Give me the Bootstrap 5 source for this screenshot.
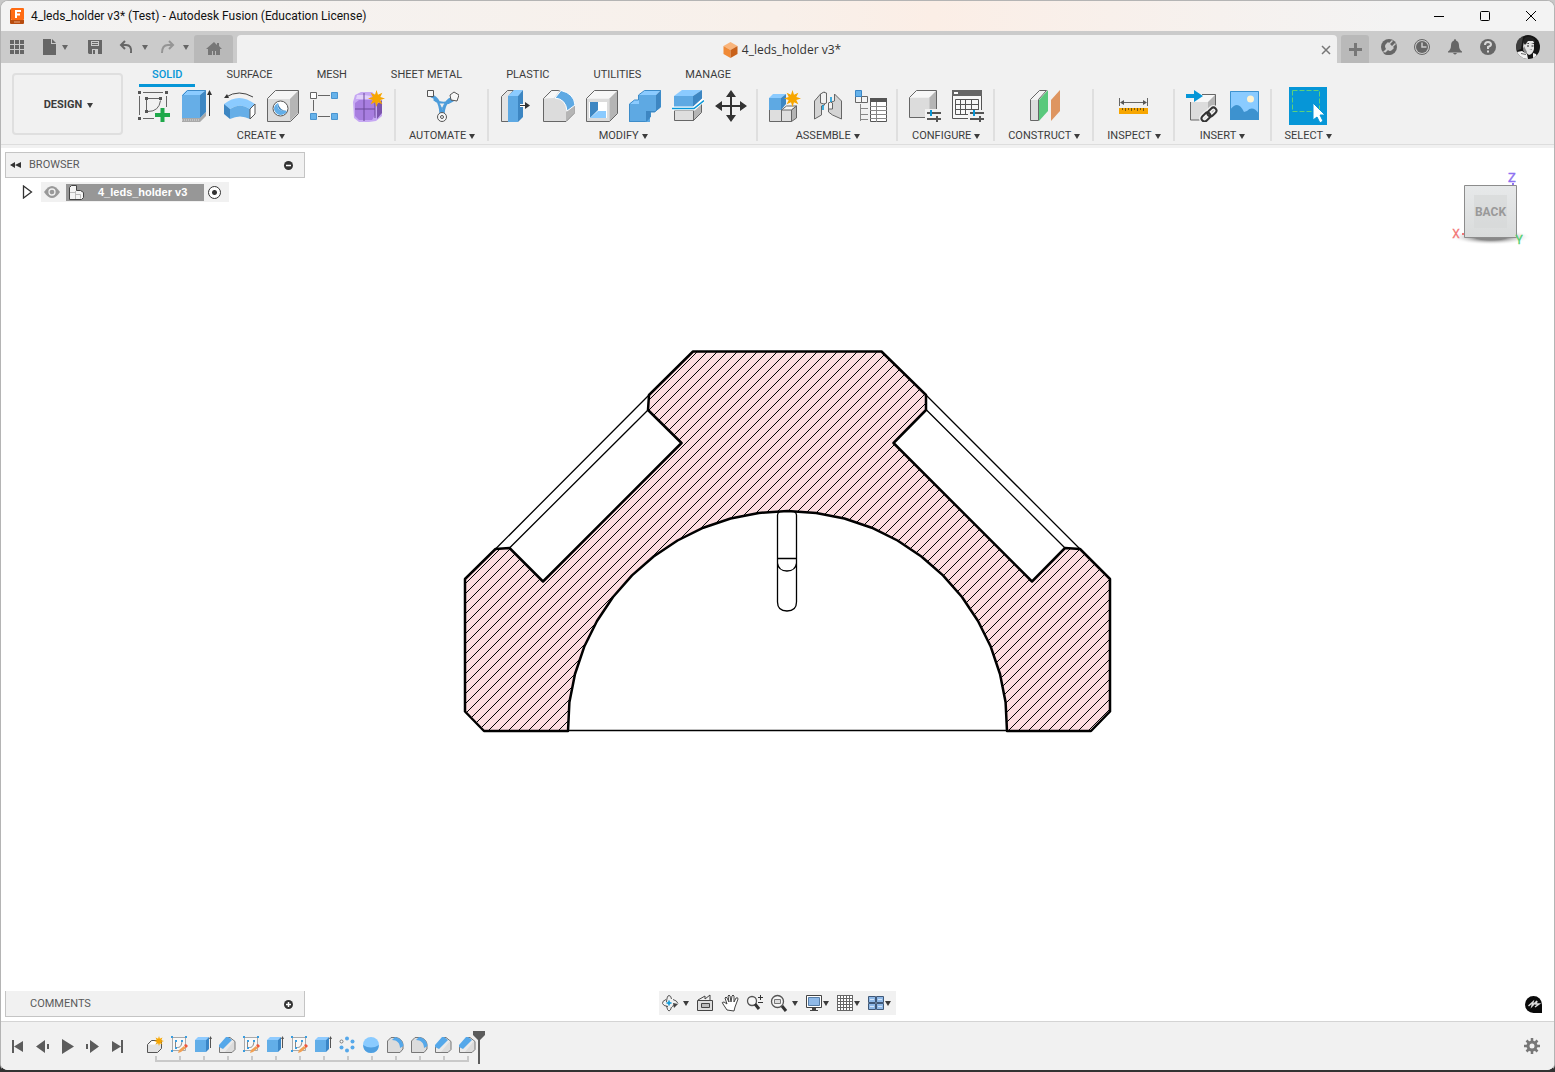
<!DOCTYPE html>
<html lang="en">
<head>
<meta charset="utf-8">
<meta name="viewport" content="width=device-width, initial-scale=1">
<title>4_leds_holder v3* (Test) - Autodesk Fusion (Education License)</title>
<link href="https://cdn.jsdelivr.net/npm/bootstrap@5.3.0/dist/css/bootstrap.min.css" rel="stylesheet">
<style>
  :root { --chrome: #f1f1f1; --ink: #3c3c3c; --glyph: #666; --edge: #b4b4b4; --accent: #0696d7; }
  body { font-family: Roboto, "Liberation Sans", sans-serif; font-size: 11px; line-height: 14px; color: var(--ink);
         background: linear-gradient(#c8c8c8 20%, #333 95%); }
  button, .plain-link { border: 0; background: none; padding: 0; color: inherit; line-height: inherit; text-decoration: none; display: flex; align-items: center; justify-content: center; }
  svg { display: block; flex: none; }
  .win { height: 100vh; border: 1px solid var(--edge); border-bottom: 2px solid #333; border-radius: 8px; overflow: hidden; background: #fff; }
  .titlebar { height: 30px; background: linear-gradient(90deg, #f3f3f3, #f8f0ea 50%, #fbeee6 60%, #f3f3f3 90%); padding-left: 8px; }
  .titlebar h1 { font: 12px/16px Roboto, "Noto Sans", sans-serif; color: #111; margin: 0 0 0 6px; }
  .titlebar button { width: 46px; height: 30px; }
  .tabbar { height: 32px; background: #cbcbcb; padding-top: 4px; color: var(--glyph); }
  .quick { height: 24px; padding-left: 8px; width: 193px; }
  .caret { width: 0; height: 0; border: 3px solid transparent; border-top: 5px solid currentColor; border-bottom: 0; flex: none; }
  .doc-home, .doc-new { background: #b9b9b9; border-radius: 3px 3px 0 0; height: 28px; color: #7d7d7d; }
  .doc-home { width: 39px; }
  .doc-new { width: 28px; }
  .doc-open { background: var(--chrome); border-radius: 4px 4px 0 0; height: 28px; padding: 2px 6px 0; margin: 0 4px; color: #333; font: 12px/16px "Open Sans", "Noto Sans", sans-serif; }
  .account { gap: 15px; padding: 0 14px 0 11px; height: 24px; }
  .ribbon { height: 82px; background: var(--chrome); border-bottom: 1px solid #ddd; padding-left: 11px; }
  .shelf { height: 3px; background: var(--chrome); }
  .workspace { width: 111px; height: 62px; border: 2px solid #dfdfdf; border-radius: 4px; margin-top: 10px; padding: 2px 0 0 2px; font-weight: 700; gap: 5px; }
  .ribbon-tabs { height: 24px; gap: 18px; padding-left: 12px; margin-left: 4px; }
  .ribbon-tabs .nav-link { padding: 5px 13px 2px; color: var(--ink); border-bottom: 3px solid transparent; height: 24px; line-height: 14px; font-size: 11px; }
  .ribbon-tabs .nav-link.active { color: var(--accent); border-color: var(--accent); font-weight: 500; }
  .tools { margin-left: 4px; }
  .tool-group { border-right: 2px solid #dfdfdf; height: 52px; margin-top: 2px; padding: 0 4px 0 5px; }
  .tool-group:last-child { border: 0; }
  .tool { width: 43px; height: 38px; margin-top: -2px; }
  .tool-menu { gap: 3px; height: 14px; margin-top: 4px; padding: 0 8px; }
  .select-tile { width: 38px; background: var(--accent); }
  .stage { min-height: 0; }
  .stage > .drawing { position: absolute; inset: 0; width: 100%; height: 100%; }
  .side-panel { width: 300px; height: 26px; background: var(--chrome); border: 1px solid #c4c4c4; color: #5a5a5a; padding: 0 10px 0 4px; }
  .side-panel h2 { font: inherit; margin: 0; }
  .comments { position: absolute; left: 4px; bottom: 4px; border-top: 0; padding: 1px 10px 0 24px; }
  .tree-row { height: 20px; padding-left: 16px; margin-top: 4px; }
  .tree-item { background: var(--chrome); width: 188px; height: 20px; padding: 0 6px 0 3px; margin-left: 6px; }
  .tree-name { background: #979797; color: #fff; font: 700 11px/16px "Liberation Sans", sans-serif; height: 17px; width: 138px; margin: 0 3px 0 6px; padding-left: 1px; gap: 13px; }
  .tree-radio { appearance: none; width: 13px; height: 13px; margin: 0 1px; border: 1px solid #333; border-radius: 50%; background: radial-gradient(#333 0 2px, #fff 3px); }
  .view-cube { position: absolute; right: 20px; top: 18px; }
  .nav-tools { background: var(--chrome); height: 24px; width: 237px; padding: 0 5px 0 2px; gap: 2px; position: absolute; bottom: 6px; left: 658px; }
  .assistant { position: absolute; right: 12px; bottom: 8px; }
  .timeline { height: 49px; background: var(--chrome); border-top: 1px solid #d4d4d4; padding: 0 14px 0 4px; color: #5c5c5c; }
  .transport button { width: 25px; height: 24px; }
  .history { position: relative; margin: 9px 0 0 13px; height: 33px; padding: 0; list-style: none; }
  .history li { width: 24px; height: 33px; padding-top: 5px; position: relative; display: flex; justify-content: center; align-items: flex-start; }
  .history li::after { content: ""; position: absolute; left: 12px; bottom: 2px; width: 2px; height: 6px; background: #c9c9c9; }
  .history::before { content: ""; position: absolute; left: 12px; right: 10px; bottom: 2px; height: 2px; background: #c9c9c9; }
  .playhead { margin: 9px 0 0 -6px; z-index: 1; }
</style>
<script src="https://cdn.jsdelivr.net/npm/bootstrap@5.3.0/dist/js/bootstrap.bundle.min.js"></script>
</head>
<body>
<svg width="0" height="0" class="position-absolute" aria-hidden="true">
  <symbol id="spark" viewBox="-8 -8 16 16"><path fill="#f7a600" d="M0-8 1.4-3.6 5.5-5.5 3.6-1.4 8 0 3.6 1.4 5.5 5.5 1.4 3.6 0 8-1.4 3.6-5.5 5.5-3.6 1.4-8 0-3.6-1.4-5.5-5.5-1.4-3.6Z"/></symbol>
  <symbol id="t-sketch" viewBox="0 0 18 18"><path fill="#f8f8f8" stroke="#aaa" d="M2.500 1.500h13v13h-13z"/><path fill="none" stroke="#888" d="M5.500 5v6.500h2c3 0 4-2 4.500-6.500"/><path fill="#3a9de0" d="M1 0h2v2H1zM15 0h2v2h-2zM1 14h2v2H1zM5 4h2v2H5zM11 4h2v2h-2zM5 11h2v2H5z"/><path fill="#f2a154" d="m8 17 1-3 5-4 2 2-5 4z"/><path fill="#f0573c" d="m14 9 2-1 2 2-2 2z"/></symbol>
  <symbol id="t-extrude" viewBox="0 0 18 18"><path fill="#62aee8" d="M1 4h11v12H1z"/><path fill="#8fcbff" d="m1 4 3-3h11l-3 3z"/><path fill="#3a86c6" d="m12 4 3-3v12l-3 3z"/><path stroke="#555" d="M16.500 1v11"/><path fill="#555" d="m16.500 0 1.500 3h-3z"/></symbol>
  <symbol id="t-chamfer" viewBox="0 0 18 18"><path fill="#dcdcdc" stroke="#777" d="M1.500 10 9 1.500h3l5 4v8l-3 3H1.500z"/><path fill="#fff" d="M2 10.500 4 12l9-9 3 2-9 11H2z" opacity=".4"/><path fill="#55a8ea" d="m1 9 7-8h2l4 3-9 9-4-2z"/></symbol>
  <symbol id="t-fillet" viewBox="0 0 18 18"><path fill="#dcdcdc" stroke="#777" d="M1.500 5 5 1.500h5c5 1 7 4 7 8V13l-3 3.500H1.500z"/><path fill="#55a8ea" d="M6 4 9 1c5 1 8 4 8.500 9L14 12c0-5-3-8-8-8z"/></symbol>
</svg>

<div class="win d-flex flex-column">
  <header class="titlebar d-flex align-items-center">
    <svg width="16" height="18" viewBox="0 0 16 18"><rect x="2" y="1" width="13" height="12" rx="1" fill="#ff6b12"/><path fill="#b84d10" d="m1 3 1-1v11h13v3q0 1-1 1H2q-1 0-1-1z"/><path fill="none" stroke="#fff" stroke-width="2" d="M7 11V4h5M7 7.500h4"/><path stroke="#e9a983" d="M5 15h6"/></svg>
    <h1>4_leds_holder v3* (Test) - Autodesk Fusion (Education License)</h1>
    <div class="ms-auto d-flex">
      <button aria-label="Minimize"><svg width="12" height="12"><path stroke="#000" d="M1 6.500h10"/></svg></button>
      <button aria-label="Maximize"><svg width="12" height="12"><rect x="1.500" y="1.500" width="9" height="9" rx="1" fill="none" stroke="#000"/></svg></button>
      <button aria-label="Close"><svg width="12" height="12"><path stroke="#000" d="m1 1 10 10M11 1 1 11"/></svg></button>
    </div>
  </header>

  <div class="tabbar d-flex align-items-start">
    <div class="quick d-flex align-items-center">
      <button aria-label="Data panel"><svg width="16" height="16"><path fill="#666" d="M1 1h4v4H1zm5 0h4v4H6zm5 0h4v4h-4zM1 6h4v4H1zm5 0h4v4H6zm5 0h4v4h-4zM1 11h4v4H1zm5 0h4v4H6zm5 0h4v4h-4z"/></svg></button>
      <button class="ms-3 gap-1" aria-label="File"><svg width="17" height="17" viewBox="0 0 17 17"><path fill="#666" d="M2 0h8v5h5v11H2zM11 0l4 4h-4z"/></svg><span class="caret"></span></button>
      <button class="ms-3 ps-1" aria-label="Save"><svg width="15" height="15" viewBox="0 0 15 15"><path fill="#666" d="M1 0h13v14H1l-1-1V0z"/><path fill="#cbcbcb" d="M3 1h8v5H3zM4 9h6v5H4z"/><path fill="#666" d="M4 2h6v1H4zm0 2h6v1H4zm1 6h2v4H5z"/></svg></button>
      <button class="ms-3 gap-2" aria-label="Undo"><svg width="15" height="14" viewBox="0 0 15 14"><path fill="none" stroke="#666" stroke-width="2" d="M6 1 2 5l4 4M2 5h5q6 0 5 8"/></svg><span class="caret"></span></button>
      <button class="ms-2 ps-1 gap-2 text-black-50" aria-label="Redo"><svg width="15" height="14" viewBox="0 0 15 14"><path fill="none" stroke="#959595" stroke-width="2" d="m9 1 4 4-4 4m4-4H8q-6 0-6 8"/></svg><span class="caret"></span></button>
    </div>
    <button class="doc-home" aria-label="Home"><svg width="16" height="14" viewBox="0 0 16 14"><path fill="#777" d="M8 0 0 7h2v6h4V9h1v4h2V9h1v4h4V7h2l-3-3V1h-2v2z"/></svg></button>
    <div class="doc-open d-flex align-items-center flex-grow-1">
      <div class="d-flex align-items-center justify-content-center flex-grow-1 gap-1">
        <svg width="15" height="16" viewBox="0 0 15 16"><path fill="#f9b57c" d="m7.500 0 7 4-7 4-7-4z"/><path fill="#f08a36" d="m.5 4 7 4v8l-7-4z"/><path fill="#c9621b" d="m14.500 4-7 4v8l7-4z"/></svg>
        <span>4_leds_holder v3*</span>
      </div>
      <button aria-label="Close document"><svg width="10" height="10"><path stroke="#777" stroke-width="1.500" d="m1 1 8 8M9 1 1 9"/></svg></button>
    </div>
    <button class="doc-new" aria-label="New design"><svg width="13" height="13"><path stroke="#777" stroke-width="3" d="M6.500 0v13M0 6.500h13"/></svg></button>
    <div class="account d-flex align-items-center">
      <button aria-label="Extensions"><svg width="18" height="18" viewBox="0 0 18 18"><circle cx="9" cy="9" r="8" fill="#666"/><path fill="#cbcbcb" d="m3 14 3-3q-2-3 0-5l2-2 1 1 3-3 1 1-3 3 2 2 3-3 1 1-3 3 1 1-2 2q-2 2-4 0l-3 3z"/><path fill="none" stroke="#666" stroke-width="1.500" d="M4 15q5 3 9-1"/></svg></button>
      <button aria-label="Job status"><svg width="18" height="18" viewBox="0 0 18 18"><circle cx="9" cy="9" r="7.500" fill="none" stroke="#666"/><circle cx="9" cy="9" r="6" fill="#666"/><path fill="none" stroke="#cbcbcb" stroke-width="1.500" d="M9 4.500V9h4.500"/></svg></button>
      <button aria-label="Notifications"><svg width="18" height="18" viewBox="0 0 18 18"><path fill="#666" d="M9 1q1 0 1 1.500 3 1 3 5 0 4 3 6v1H2v-1q3-2 3-6 0-4 3-5Q8 1 9 1zM7 15h4q-2 3-4 0z"/></svg></button>
      <button aria-label="Help"><svg width="18" height="18" viewBox="0 0 18 18"><circle cx="9" cy="9" r="8" fill="#666"/><path fill="none" stroke="#d8d8d8" stroke-width="2" d="M6 7q0-3 3-3t3 2.500Q12 8 9 9v2M9 12.500v2"/></svg></button>
      <button class="ms-1" aria-label="Profile"><svg width="24" height="24" viewBox="0 0 24 24"><clipPath id="round"><circle cx="12" cy="12" r="12"/></clipPath><g clip-path="url(#round)"><path fill="#151515" d="M0 0h24v24H0z"/><path fill="#666" d="M0 4 7 2 5 14 0 16z" opacity=".5"/><path fill="#e4e4e4" d="M8 6q5-4 10 0v8q-1 5-5 6l-4-3-2-5z"/><path fill="#222" d="M7 7q1-6 7-5t5 7l-2-3-5 0-3 4zM10 9l3-1v1zM15 8l3 0v1z"/><path fill="#222" d="M11 10.500h2v1h-2zM15.500 10.500h2v1h-2z"/><path fill="#888" d="m8 11 3 6-1 3-3-5zM13 15l3-1v1z"/><path fill="#f2f2f2" d="m1 17 5-1 5 3 1 5H3zM17 18l3 1 2 5h-5z"/><path fill="#666" d="m5 18 5 1v1l-5-1z"/></g></svg></button>
    </div>
  </div>

  <section class="ribbon d-flex">
    <button class="workspace">DESIGN <span class="caret"></span></button>
    <div>
      <nav class="nav ribbon-tabs flex-nowrap" aria-label="Ribbon">
        <a class="nav-link active" href="#">SOLID</a><a class="nav-link" href="#">SURFACE</a><a class="nav-link" href="#">MESH</a><a class="nav-link" href="#">SHEET METAL</a><a class="nav-link" href="#">PLASTIC</a><a class="nav-link" href="#">UTILITIES</a><a class="nav-link" href="#">MANAGE</a>
      </nav>
      <div class="tools d-flex">
        <div class="tool-group">
          <div class="d-flex">
            <button class="tool" aria-label="Create sketch"><svg width="33" height="32"><path fill="none" stroke="#666" d="M6 2.500h20M6 28.500h11M2.500 6v19M29.500 6v11"/><path fill="#555" d="M1 1h3v3H1zM28 1h3v3h-3zM1 27h3v3H1zM8 7h3v3H8zM22 7h3v3h-3zM8 20h3v3H8z"/><path fill="none" stroke="#666" d="M11 8.500h11M9.500 10v10M11 21.500q11 0 12.500-11"/><path fill="#1fa84a" d="M23.500 18h4v5H33v4h-5.500v5h-4v-5H18v-4h5.500z"/></svg></button>
            <button class="tool" aria-label="Extrude"><svg width="33" height="32"><path fill="#a9a9a9" d="m2 28 18 0 6-6v4l-6 6H2z"/><path stroke="#ddd" stroke-dasharray="1 1" d="M2 30h18"/><path fill="#66aee7" d="M2 5h18v23H2z"/><path fill="#8bcbff" d="m2 5 5-5h19l-6 5z"/><path fill="#3d86c2" d="m20 5 6-5v22l-6 6z"/><path fill="none" stroke="#3c8ac8" d="M2.500 5.500 7.500.5h18V22"/><path stroke="#333" d="M29.500 2v24"/><path fill="#333" d="m29.500 0 2.500 5h-5z"/></svg></button>
            <button class="tool" aria-label="Revolve"><svg width="33" height="32"><path fill="none" stroke="#444" d="M3 7q13-8 27 0"/><path fill="#333" d="m1 8 3-4 2 4z"/><path fill="#8bcbff" d="M1 14q15-12 31 0l-5 5q-10-7-20 0z"/><path fill="#66aee7" d="M7 19q10-7 20 0v10q-10-5-20 0z"/><path fill="#3d86c2" d="m1 14 6 5v10l-6-5z"/><path fill="#fff" stroke="#555" d="m32 14-5 5v10l5-5z"/></svg></button>
            <button class="tool" aria-label="Hole"><svg width="33" height="32"><path fill="#dcdcdc" d="M1.500 9 9 1h23v22l-8 8H1.500z"/><path fill="#f5f5f5" d="M2 9 9 1h23l-8 8z"/><path fill="#b5b5b5" d="m24 9 8-8v22l-8 8z"/><path fill="none" stroke="#666" d="m1.500 8.500 8-8h23v23l-8 8h-23z"/><circle cx="14.500" cy="18.500" r="7.500" fill="#fff" stroke="#555"/><path fill="#62aee8" d="M12 13q-2 9 9 8-2 4-7 4-5-1-6-6 0-4 4-6z"/><path fill="#3a7db5" d="M12 13q-1 9 9 8-8-1-9-8z"/></svg></button>
            <button class="tool" aria-label="Pattern"><svg width="33" height="32"><path stroke="#666" d="M9 5.500h12M9 26.500h12M4.500 10v11"/><path fill="#fff" stroke="#666" d="M1.500 2.500h6v6h-6z"/><path fill="#66b2ea" stroke="#4a94cf" d="M22.500 2.500h6v6h-6zM1.500 23.500h6v6h-6zM22.500 23.500h6v6h-6z"/></svg></button>
            <button class="tool" aria-label="Create form"><svg width="33" height="32"><path fill="#c6a8f3" d="m1 12 2-7 6-3h11l8 7 2 5v12l-6 5-7 1H7l-5-4z"/><path fill="#a87ee0" d="m3 13 4-3h13l3 3v12l-3 5H7l-4-4z"/><path fill="#7c55ad" d="m25 14 5-4v13l-5 6z"/><path fill="#e1d0fb" d="M5 5h7l7 1-2 3H4z"/><path fill="none" stroke="#6b4899" d="M12 3v28M3 19h20M23 12v16"/><use href="#spark" x="16" y="0" width="17" height="17"/></svg></button>
          </div>
          <button class="tool-menu w-100">CREATE <span class="caret"></span></button>
        </div>
        <div class="tool-group">
          <div class="d-flex justify-content-center"><button class="tool" aria-label="Automated modeling"><svg width="33" height="32"><path fill="none" stroke="#4d9ddb" stroke-width="3" d="M5 6q10 2 10 21M28 8q-11 2-11 19M8 9q9 8 19 1"/><path fill="#eee" stroke="#4d9ddb" d="m13 13 3 6 3-6z"/><path fill="#f7f7f7" stroke="#555" d="M1.500.5h6v6h-6zM24 5l4-3 5 3-2 6-6-1z"/><circle cx="16" cy="27" r="4.500" fill="#f7f7f7" stroke="#555"/><circle cx="16" cy="27" r="1.500" fill="none" stroke="#555"/></svg></button></div>
          <button class="tool-menu w-100">AUTOMATE <span class="caret"></span></button>
        </div>
        <div class="tool-group">
          <div class="d-flex">
            <button class="tool" aria-label="Press pull"><svg width="33" height="32"><path fill="#e4e4e4" stroke="#666" d="m2.500 6.500 6-6h6l-5 6v25h-7z"/><path fill="#5ea9e3" d="M9 6h10v26H9z"/><path fill="#8bcbff" d="m9 6 6-6h9l-5 6z"/><path fill="#3d86c2" d="m19 6 5-6v27l-5 5z"/><path stroke="#fff" stroke-width="3" d="M21 15.500h6"/><path stroke="#333" d="M21 15.500h7"/><path fill="#333" d="m26 12 5 3.500-5 3.500z"/></svg></button>
            <button class="tool" aria-label="Fillet"><svg width="33" height="32"><path fill="#dcdcdc" stroke="#666" d="m1.500 8.500 8-8H16q14 3 16 16v7l-8 8H1.500z"/><path fill="#f7f7f7" d="M2 8.500 10 1h7l-5 7z"/><path fill="#b5b5b5" d="m24 22 8-6v7l-8 8z"/><path fill="#5ea9e3" stroke="#fff" d="m13 8 6-7.500q13 3 14 14.500l-8 6Q24 9 13 8z"/></svg></button>
            <button class="tool" aria-label="Shell"><svg width="33" height="32"><path fill="#dcdcdc" d="M1.500 8.500h23v23h-23z"/><path fill="#f7f7f7" d="m1.500 8.500 8-8h23l-8 8z"/><path fill="#b5b5b5" d="m24.500 8.500 8-8v23l-8 8z"/><path fill="none" stroke="#666" d="m1.500 8.500 8-8h23v23l-8 8h-23z"/><path fill="#fff" d="M4 12h18v16H4z"/><path fill="#3d86c2" d="M5 12h8v8l-8 8z"/><path fill="#8bcbff" d="m5 28 8-7h8v7z"/></svg></button>
            <button class="tool" aria-label="Combine"><svg width="33" height="32"><path fill="#5ea9e3" d="M1 14h10V5h17v16h-6v11H1z"/><path fill="#8bcbff" d="m11 5 6-5h16l-5 5zM1 14l5-4h5v4z"/><path fill="#3d86c2" d="m28 5 5-5v17l-6 5h-5v6l-4 4V21h10z"/><path fill="none" stroke="#3d8cc9" d="m1.500 14 5-4h4V5l6-4.500h16V17l-6 5h-4v5l-5 4.500h-16z"/></svg></button>
            <button class="tool" aria-label="Split body"><svg width="33" height="32"><path fill="#dedede" stroke="#666" d="M3.500 20.500h19v10h-19z"/><path fill="#b5b5b5" stroke="#666" d="m22.500 20.500 8-7v9l-8 8z"/><path fill="#5ea9e3" d="M3 6h19v11H3z"/><path fill="#8bcbff" d="m3 6 8-6h20l-9 6z"/><path fill="#3d86c2" d="m22 6 9-6v9l-9 8z"/><path fill="none" stroke="#fff" stroke-width="4" d="M1 18.500h22l10-9"/><path fill="none" stroke="#0696d7" stroke-width="1.500" d="M1 18.500h22l10-8"/></svg></button>
            <button class="tool" aria-label="Move"><svg width="33" height="32"><path stroke="#333" stroke-width="2" d="M17 5v22M6 16h22"/><path fill="#333" d="m17 0 5 7H12zM17 32l-5-7h10zM1 16l7-5v10zM33 16l-7 5V11z"/></svg></button>
          </div>
          <button class="tool-menu w-100">MODIFY <span class="caret"></span></button>
        </div>
        <div class="tool-group">
          <div class="d-flex">
            <button class="tool" aria-label="New component"><svg width="33" height="32"><path fill="#dedede" stroke="#666" d="M1.500 19.500h12v12h-12zM13.500 19.500h10v12h-10z"/><path fill="#f7f7f7" stroke="#666" d="m13.500 20 5-4h10l-5 4z"/><path fill="#b5b5b5" stroke="#666" d="m23.500 20 5-4v12l-5 3.500z"/><path fill="#5ea9e3" d="M1 8h12v12H1z"/><path fill="#8bcbff" d="m1 8 4-4h13l-5 4z"/><path fill="#3d86c2" d="m13 8 5-4v10l-5 6z"/><use href="#spark" x="16" y="0" width="17" height="17"/></svg></button>
            <button class="tool" aria-label="Joint"><svg width="33" height="32"><path fill="#d4d4d4" stroke="#666" d="m3.500 11 6-7 4-2v13l-3 1v9l-7 4zM30.500 11v18l-9-4-4-3v-9l6-2V4z"/><path fill="#f2f2f2" stroke="#666" d="M9.500 4q3-3 6-1v10q-2 2-6 0zM17.500 13q2-2 4 0v6h-4z"/><path stroke="#0696d7" stroke-width="1.500" d="M12 15v5M20 7v5"/></svg></button>
            <button class="tool" aria-label="Bill of materials"><svg width="33" height="32"><path fill="#f4f4f4" stroke="#666" d="M1.500 6.500h6v6h-6zM7.500 6.500h6v6h-6z"/><path fill="#66b2ea" stroke="#3a86c6" d="M1.500.5h6v6h-6z"/><path fill="none" stroke="#888" d="M6.500 14v17M7 18.500h7M7 24.500h7M7 29.500h7"/><path fill="#fff" stroke="#555" d="M16.500 8.500h16v23h-16z"/><path fill="#555" d="M16 8h17v4H16z"/><path stroke="#888" d="M16 16.500h17M16 20.500h17M16 24.500h17M16 28.500h17M22.500 12v20"/></svg></button>
          </div>
          <button class="tool-menu w-100">ASSEMBLE <span class="caret"></span></button>
        </div>
        <div class="tool-group">
          <div class="d-flex justify-content-center">
            <button class="tool" aria-label="Configure"><svg width="33" height="32"><path fill="#dcdcdc" d="M1.500 7.500h21v20h-21z"/><path fill="#f7f7f7" d="m1.500 7.500 7-7h20l-7 7z"/><path fill="#b5b5b5" d="m21.500 7.500 7-7v20l-7 7z"/><path fill="none" stroke="#666" d="m1.500 7.500 7-7h20v27h-27z"/><path fill="#f1f1f1" d="M17 19h16v13H17z"/><path stroke="#555" stroke-width="2" d="M19 23h14M19 29h14"/><path stroke="#0696d7" stroke-width="2" d="M23 20v6"/><path stroke="#555" stroke-width="2" d="M29 26v6"/></svg></button>
            <button class="tool" aria-label="Configuration table"><svg width="33" height="32"><path fill="#f8f8f8" stroke="#555" d="M1.500.5h29v28h-29z"/><path fill="#666" d="M1 0h30v6H1z"/><path fill="#fff" d="M3 2h4v2H3z"/><path fill="none" stroke="#555" d="M4.500 9.500h23v15h-23zM4 14.500h24M4 19.500h24M9.500 9v16M14.500 9v16M20.500 9v16"/><path fill="#f1f1f1" d="M17 20h16v12H17z"/><path stroke="#555" stroke-width="2" d="M19 23h14M19 29h14"/><path stroke="#0696d7" stroke-width="2" d="M23 20v6"/><path stroke="#555" stroke-width="2" d="M29 26v6"/></svg></button>
          </div>
          <button class="tool-menu w-100">CONFIGURE <span class="caret"></span></button>
        </div>
        <div class="tool-group">
          <div class="d-flex justify-content-center"><button class="tool" aria-label="Offset plane"><svg width="33" height="32"><path fill="#f3f3f3" stroke="#666" d="m2.500 9.500 9-9h7l-8 9v21h-8z"/><path fill="#ddd" d="M3 10h7v20H3z"/><path fill="#59c97c" d="m11 10 9-10v21l-9 10z"/><path fill="#de9560" d="m23 10 9-10v21l-9 10z"/></svg></button></div>
          <button class="tool-menu w-100">CONSTRUCT <span class="caret"></span></button>
        </div>
        <div class="tool-group">
          <div class="d-flex justify-content-center"><button class="tool" aria-label="Measure"><svg width="33" height="32"><path fill="none" stroke="#666" d="M2.500 8v8M30.500 8v8M4 12.500h25"/><path fill="#555" d="m3 12.500 4-2.500v5zM30 12.500 26 10v5z"/><path fill="#f7a600" d="M2 18h29v6H2z"/><path stroke="#7a5a10" d="M5.500 18v2M8.500 18v3M11.500 18v2M14.500 18v3M17.500 18v2M20.500 18v3M23.500 18v2M26.500 18v3"/></svg></button></div>
          <button class="tool-menu w-100">INSPECT <span class="caret"></span></button>
        </div>
        <div class="tool-group">
          <div class="d-flex justify-content-center">
            <button class="tool" aria-label="Insert derive"><svg width="33" height="32"><path fill="#dcdcdc" d="M5 12h19v18H5z"/><path fill="#f7f7f7" d="m5 12 8-8h18l-8 8z"/><path fill="#b5b5b5" d="m23 12 8-8v18l-8 8z"/><path fill="none" stroke="#666" d="M5.500 12v18h12M17 4.500h13.500V17"/><path fill="#0696d7" d="M1 4h8V0l9 6-9 6V8H1z"/><g fill="none" stroke="#f1f1f1" stroke-width="5"><rect x="-5" y="-3" width="10" height="6" rx="3" transform="translate(21 27) rotate(-45)"/><rect x="-5" y="-3" width="10" height="6" rx="3" transform="translate(27 22) rotate(-45)"/></g><g fill="none" stroke="#333" stroke-width="2"><rect x="-5" y="-3" width="10" height="6" rx="3" transform="translate(21 27) rotate(-45)"/><rect x="-5" y="-3" width="10" height="6" rx="3" transform="translate(27 22) rotate(-45)"/></g></svg></button>
            <button class="tool" aria-label="Canvas"><svg width="33" height="32"><path fill="#8acbff" d="M2 1h29v29H2z"/><circle cx="22.500" cy="9" r="3.500" fill="#fff3d1"/><path fill="#3d92cf" d="M2 20q8-11 14 2l3-1q6-6 12 3v6H2z"/><path fill="none" stroke="#3d92cf" d="M2.500 1.500h28v28h-28z"/></svg></button>
          </div>
          <button class="tool-menu w-100">INSERT <span class="caret"></span></button>
        </div>
        <div class="tool-group">
          <div class="d-flex justify-content-center"><button class="tool select-tile" aria-label="Select"><svg width="38" height="38"><path fill="none" stroke="#5ed07a" stroke-dasharray="5 2" d="M3.500 3.500h27v21h-27z"/><path fill="#fff" stroke="#0696d7" d="M24 16v17l4-3 3 6 3-2-3-6h5z"/></svg></button></div>
          <button class="tool-menu w-100">SELECT <span class="caret"></span></button>
        </div>
      </div>
    </div>
  </section>
  <div class="shelf"></div>

  <main class="stage flex-grow-1 position-relative">
    <svg class="drawing" viewBox="1 148 1553 873" role="img" aria-label="Section view of the LED holder">
      <defs><pattern id="hatch" width="10" height="10" patternUnits="userSpaceOnUse"><path fill="#fddde0" d="M0 0h10v10H0z"/><path fill="#000" shape-rendering="crispEdges" d="M0 8h1v1H0zM1 7h1v1H1zM2 6h1v1H2zM3 5h1v1H3zM4 4h1v1H4zM5 3h1v1H5zM6 2h1v1H6zM7 1h1v1H7zM8 0h1v1H8zM9 9h1v1H9z"/></pattern></defs>
      <g fill="none" stroke="#000" stroke-width="1.300">
        <path d="M649 395 495.500 549M648 410 509.500 548M926 395 1080 549M926.500 410 1065 548M568 730.500h439"/>
        <path d="M779.500 512q-2 1-2 3v87q0 9 9.500 9t9.500-9v-87q0-2-2-3M777.500 558.500h19M777.500 563q1 8 9.500 8t9.500-8"/>
      </g>
      <path fill="url(#hatch)" stroke="#000" stroke-width="2.500" stroke-linejoin="round" d="M693 351.500H881.500L926 395V410L893.500 443 1032 581.500 1065 548 1080 549 1110 579V711.500L1091 731H1007L1005.600 702.300 1000 674 990.800 646.800 978 621 962 597 943 575.400 921.400 556.500 897.500 540.500 871.700 527.700 844.400 518.500 816.200 512.900 787.500 511 758.800 512.900 730.600 518.500 703.300 527.700 677.500 540.500 653.600 556.500 632 575.400 613 597 597 621 584.200 646.800 575 674 569.400 702.300 568 731H484L465 711.500V579L495.500 549 509.500 548 543 581.500 681.500 443 648 410 649 395Z"/>
    </svg>

    <aside class="position-relative pt-1 ps-1">
      <div class="side-panel d-flex align-items-center">
        <button aria-label="Collapse browser"><svg width="11" height="8"><path fill="#333" d="M5 1v6L0 4zM11 1v6L5 4z"/></svg></button>
        <h2 class="ms-2">BROWSER</h2>
        <button class="ms-auto" aria-label="Hide browser"><svg width="11" height="11"><circle cx="5.500" cy="5.500" r="4.500" fill="#333"/><path stroke="#fff" stroke-width="1.500" d="M3 5.500h5"/></svg></button>
      </div>
      <div class="tree-row d-flex align-items-center">
        <button aria-label="Expand"><svg width="14" height="14"><path fill="#fff" stroke="#333" stroke-width="1.300" d="M2.500 1v12l8-6z"/></svg></button>
        <div class="tree-item d-flex align-items-center">
          <button aria-label="Visibility"><svg width="16" height="12" viewBox="0 0 16 12"><path fill="#999" d="M0 6q8-12 16 0-8 12-16 0z"/><circle cx="8" cy="6" r="3" fill="#999" stroke="#f1f1f1" stroke-width="1.300"/></svg></button>
          <label for="activate" class="tree-name d-flex align-items-center"><svg width="18" height="17" viewBox="0 0 18 17"><path fill="#f4f4f4" stroke="#444" d="m2.500 3.500 2-2h5v5h4l3 2v5l-2 2h-12z"/><path fill="none" stroke="#bbb" d="M3 8.500h5M8.500 7v8M9 10.500h4.500v4"/></svg>4_leds_holder v3</label>
          <input class="tree-radio" type="radio" id="activate" checked>
        </div>
      </div>
    </aside>

    <div class="view-cube">
      <svg width="90" height="82" viewBox="0 0 90 82" role="img" aria-label="View cube">
        <defs><linearGradient id="face" x1="0" y1="0" x2="0" y2="1"><stop offset="0" stop-color="#e7e9ea"/><stop offset="1" stop-color="#d9dbdb"/></linearGradient><radialGradient id="shade"><stop offset=".4" stop-color="#888"/><stop offset="1" stop-color="#fff" stop-opacity="0"/></radialGradient></defs>
        <ellipse cx="47" cy="71" rx="40" ry="8" fill="url(#shade)"/>
        <path fill="url(#face)" stroke="#8c8c8c" d="M20.500 19.500h52v52h-52z"/><path fill="#d5d7d7" opacity=".6" d="M30 29h33v33H30z"/>
        <text x="46.500" y="50" text-anchor="middle" font-size="12" font-weight="700" fill="#999">BACK</text>
        <text x="68" y="16" text-anchor="middle" font-size="13" fill="#8e72f2" stroke="#8e72f2" stroke-width=".3">Z</text>
        <text x="12" y="72" text-anchor="middle" font-size="12" fill="#f27474" stroke="#f27474" stroke-width=".3">X</text>
        <text x="75" y="78" text-anchor="middle" font-size="12" fill="#4fd06e" stroke="#4fd06e" stroke-width=".3">Y</text>
        <path fill="#f27474" d="M18 67h2v2h-2z"/><path fill="#8e72f2" d="M68 17h2v2h-2z"/>
      </svg>
    </div>

    <section class="side-panel comments d-flex align-items-center">
      <h2>COMMENTS</h2>
      <button class="ms-auto" aria-label="Add comment"><svg width="11" height="11"><circle cx="5.500" cy="5.500" r="4.500" fill="#333"/><path stroke="#fff" stroke-width="1.500" d="M3 5.500h5M5.500 3v5"/></svg></button>
    </section>

    <div class="nav-tools d-flex align-items-center justify-content-between" role="toolbar" aria-label="Navigation">
      <button class="gap-1" aria-label="Orbit"><svg width="18" height="18"><g fill="none" stroke="#555"><path d="M5 5.500Q1 7 1.500 9.500T7 12.500M11 12.500l4-2"/><path d="M5.500 12q1 5 2.500 5t2.500-4M10.500 5Q10 1.500 8 1.500T5.500 8M12 5.500q4 1 5 4"/></g><path fill="#444" d="m12 9 5 1-4 4z"/><path stroke="#0696d7" stroke-width="1.500" d="M8 6.500v5M5.500 9h5"/></svg><span class="caret"></span></button>
      <button aria-label="Look at"><svg width="18" height="18"><path fill="#ddd" stroke="#444" d="M1.500 6.500h15v10h-15z"/><path fill="#bbb" stroke="#444" d="M5.500 9.500h8v4h-8z"/><path fill="none" stroke="#444" d="m2 6 7-4v3l5-4v5"/></svg></button>
      <button aria-label="Pan"><svg width="18" height="18"><path fill="#fff" stroke="#444" d="M6 16 2 10q-2-2 1-2l3 2-2-6q1-2 2 0l2 4-1-6q1-2 2 0l1 6 1-6q1-2 2 0v6l2-4q2-1 2 1l-3 8-1 4z"/></svg></button>
      <button aria-label="Zoom"><svg width="18" height="18"><circle cx="6" cy="7" r="4.500" fill="#f7f7f7" stroke="#555" stroke-width="1.300"/><path stroke="#333" stroke-width="3" d="m9 10 4 5"/><path stroke="#333" d="M12 3.500h5M14.500 1v5M12 8.500h5"/></svg></button>
      <button class="gap-1" aria-label="Fit"><svg width="18" height="18"><circle cx="7.500" cy="7.500" r="6" fill="#f7f7f7" stroke="#555" stroke-width="1.300"/><path fill="#ddd" stroke="#777" d="M4.500 5.500h6v4h-6z"/><path stroke="#333" stroke-width="3" d="m12 12 4 5"/></svg><span class="caret"></span></button>
      <button aria-label="Display settings"><svg width="18" height="18"><path fill="#fff" stroke="#444" d="M1.500 1.500h15v12h-15z"/><path fill="#8fb9e8" stroke="#557da8" d="M3.500 3.500h11v8h-11z"/><path fill="#444" d="M7 14h4v2h2v1H5v-1h2z"/></svg><span class="caret"></span></button>
      <button aria-label="Grid and snaps"><svg width="18" height="18"><path fill="#fff" d="M1 1h16v16H1z"/><path stroke="#666" d="M1 1.500h16M1 4.500h16M1 7.500h16M1 10.500h16M1 13.500h16M1 16.500h16M1.500 1v16M4.500 1v16M7.500 1v16M10.500 1v16M13.500 1v16M16.500 1v16"/></svg><span class="caret"></span></button>
      <button aria-label="Viewports"><svg width="18" height="18"><path fill="#8fb9e8" stroke="#3f5878" d="M1.500 2.500h7v6h-7zM9.500 2.500h7v6h-7zM1.500 9.500h7v6h-7zM9.500 9.500h7v6h-7z"/><path stroke="#d3e4f8" d="M3 5.500h4M11 5.500h4M3 12.500h4M11 12.500h4"/></svg><span class="caret"></span></button>
    </div>
    <button class="assistant" aria-label="Assistant"><svg width="17" height="17" viewBox="0 0 17 17"><path fill="#0a0a0a" d="M8.500 0A8.500 8.500 0 0 1 17 8.500V17H8.500a8.500 8.500 0 0 1 0-17z"/><path fill="none" stroke="#ddd" stroke-width="1.500" d="m3.500 10 4.500-4-1 4L12 5l-1 3h3l-4 3"/></svg></button>
  </main>

  <footer class="timeline d-flex align-items-start">
    <div class="transport d-flex mt-2 pt-1">
      <button aria-label="Go to start"><svg width="13" height="13"><path fill="currentColor" d="M1 0h2v13H1zM12 1v11L3 6.500z"/></svg></button>
      <button aria-label="Step back"><svg width="13" height="13"><path fill="currentColor" d="M9 0v13L0 6.500zM11 4h2v5h-2z"/></svg></button>
      <button aria-label="Play"><svg width="13" height="15"><path fill="currentColor" d="M1 0v15l12-7.500z"/></svg></button>
      <button aria-label="Step forward"><svg width="13" height="13"><path fill="currentColor" d="M4 0v13l9-6.500zM0 4h2v5H0z"/></svg></button>
      <button aria-label="Go to end"><svg width="13" height="13"><path fill="currentColor" d="M10 0h2v13h-2zM1 1v11l9-5.500z"/></svg></button>
    </div>
    <ol class="history d-flex">
      <li><svg width="18" height="18"><path fill="#e2e2e2" stroke="#555" d="m1.500 8.500 4-4h10v8l-4 4h-10z"/><path fill="#fff" d="m2.500 8.500 4-3.500h5L9 8.500z"/><use href="#spark" x="8" y="0" width="10" height="10"/></svg></li>
      <li><svg width="18" height="18"><use href="#t-sketch"/></svg></li>
      <li><svg width="18" height="18"><use href="#t-extrude"/></svg></li>
      <li><svg width="18" height="18"><use href="#t-chamfer"/></svg></li>
      <li><svg width="18" height="18"><use href="#t-sketch"/></svg></li>
      <li><svg width="18" height="18"><use href="#t-extrude"/></svg></li>
      <li><svg width="18" height="18"><use href="#t-sketch"/></svg></li>
      <li><svg width="18" height="18"><use href="#t-extrude"/></svg></li>
      <li><svg width="18" height="18"><g fill="#55a8ea"><circle cx="9" cy="2.500" r="2"/><circle cx="14.500" cy="5.500" r="2"/><circle cx="14.500" cy="11.500" r="2"/><circle cx="9" cy="14.500" r="2"/><circle cx="3.500" cy="11.500" r="2"/></g><circle cx="3.500" cy="5.500" r="1.500" fill="#fff" stroke="#777"/></svg></li>
      <li><svg width="18" height="18"><circle cx="9" cy="9" r="8" fill="#8acbff"/><path fill="#4f9fe0" d="M1 9q8 5 16 0-1 8-8 8T1 9z"/></svg></li>
      <li><svg width="18" height="18"><use href="#t-fillet"/></svg></li>
      <li><svg width="18" height="18"><use href="#t-fillet"/></svg></li>
      <li><svg width="18" height="18"><use href="#t-chamfer"/></svg></li>
      <li><svg width="18" height="18"><use href="#t-chamfer"/></svg></li>
    </ol>
    <svg class="playhead" width="12" height="33"><path fill="#5c5c5c" d="M0 0h12v4L7 9v24H5V9L0 4z"/></svg>
    <button class="ms-auto mt-3" aria-label="Timeline settings"><svg width="16" height="16" viewBox="-8 -8 16 16"><circle r="4" fill="none" stroke="#777" stroke-width="3"/><path stroke="#777" stroke-width="2.500" d="M0-8v3M0 8V5M-8 0h3M8 0H5M-5.500-5.500l2 2M5.500 5.500l-2-2M-5.500 5.500l2-2M5.500-5.500l-2 2"/></svg></button>
  </footer>
</div>
</body>
</html>
